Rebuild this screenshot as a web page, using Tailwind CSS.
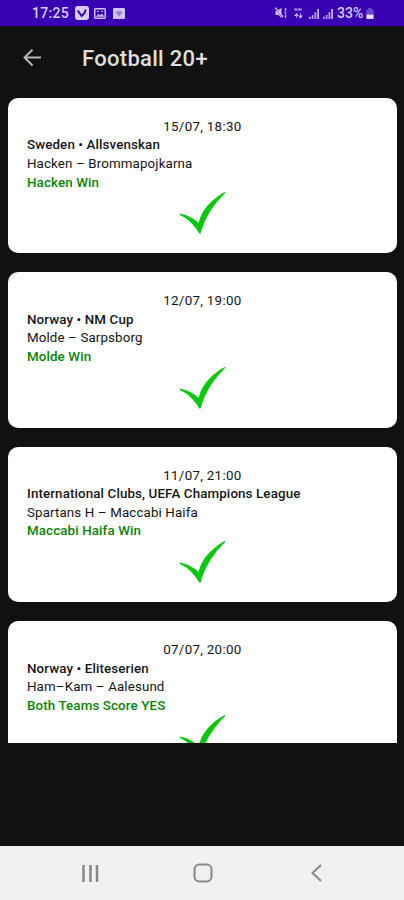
<!DOCTYPE html>
<html lang="en">
<head>
<meta charset="utf-8">
<meta name="viewport" content="width=device-width, initial-scale=1">
<title>Football 20+</title>
<script src="https://cdn.jsdelivr.net/npm/@tailwindcss/browser@4"></script>
</head>
<body class="bg-[#111111] font-['Roboto',sans-serif]">
<svg class="hidden">
  <symbol id="tick" viewBox="0 0 46 42"><path fill="#08c80c" d="M0.3 21.500 C8 23 14.500 26.500 19 31 C22 18 31 8 45 0 L45.800 .8 C34 12.500 25.500 25 21 41.500 L19.500 41.500 C16 34.500 9 27 0.500 23Z"/></symbol>
  <symbol id="signal" viewBox="0 0 12 12"><path stroke="#b7a1ed" stroke-width="1.9" d="M1.5 12V9.5M4.5 12V7.5M7.5 12V4.5"/><path stroke="#c8b8f3" stroke-width="1.9" d="M10.5 12V1"/></symbol>
</svg>
<div class="flex h-[900px] w-[404px] flex-col overflow-hidden">
  <header class="flex h-[26px] shrink-0 items-center bg-[#3700b3] pl-[32px] pr-[29px] text-[#d9cef5]">
    <span class="w-[42px] whitespace-nowrap text-[14px] leading-[26px] font-medium tracking-[0.3px]">17:25</span>
    <svg class="ml-[1px] h-[14px] w-[14px]" viewBox="0 0 14 14"><rect width="14" height="14" rx="3" fill="#d9cef5"/><path d="M2.800 4.500L6.500 10 9.500 7 10.700 3.500" fill="none" stroke="#3700b3" stroke-width="2"/></svg>
    <svg class="ml-[5px] h-[11px] w-[12px]" viewBox="0 0 12 11"><rect x=".75" y=".75" width="10.5" height="9.5" rx="1" fill="none" stroke="#d0c2f4" stroke-width="1.5"/><path d="M2 8.7l2.5-3 1.6 1.7L8 5.5l2.3 3.2z" fill="#d0c2f4"/><path d="M3 3.4h2M7 3.4h2" stroke="#d0c2f4"/></svg>
    <svg class="ml-[7px] h-[11px] w-[12px]" viewBox="0 0 12 11"><rect width="12" height="11" rx="1" fill="#d0c2f4"/><path d="M2.5 4.3Q6 1.2 9.5 4.3L6 8.5z" fill="#9a7dde"/></svg>
    <div class="flex-1"></div>
    <svg class="h-[12px] w-[12px]" viewBox="0 0 12 12"><path d="M0.5 4h2l4-3.2v10.4L3.5 8h-3z" fill="#d0c2f4"/><path d="M0 1.500l8 9.500" stroke="#3700b3" stroke-width="1"/><path d="M0 0.5l8 9.5" stroke="#d0c2f4" stroke-width="1.3"/><path d="M10.5 1v10" stroke="#bba6ef" stroke-width="1.5" stroke-dasharray="3 .5"/></svg>
    <svg class="ml-[7px] h-[12px] w-[9px]" viewBox="0 0 9 12"><path d="M1 1v3M3 1v3M1 2.5h2M5 1v3M7 1v3M5 2.5h2" stroke="#b7a1ed"/><path d="M2.5 6L5 9H0zM6.5 11.5L9 8.5H4z" fill="#d0c2f4"/><path d="M2.5 8v3M6.5 6v3" stroke="#b7a1ed"/></svg>
    <svg class="ml-[5px] h-[11px] w-[12px]"><use href="#signal"/></svg>
    <svg class="ml-[2px] h-[11px] w-[12px]"><use href="#signal"/></svg>
    <span class="ml-[3px] w-[28px] whitespace-nowrap text-[14px] leading-[26px] font-medium">33%</span>
    <svg class="ml-[1px] mr-[1px] h-[11px] w-[8px]" viewBox="0 0 8 12"><path d="M2 0h4v2h2v5H0V2h2z" fill="#6f48cd"/><path d="M0 7h8v4q0 1-1 1H1q-1 0-1-1z" fill="#e2d9fa"/></svg>
  </header>
  <div class="flex h-[64px] shrink-0 items-center pl-[23px]">
    <svg class="h-[18px] w-[19px]" viewBox="0 0 19 18" fill="none" stroke="#b9b9b9" stroke-width="1.9"><path d="M18 8.500H1.5M9.500 .700L1.5 8.500l8 8"/></svg>
    <h1 class="ml-[40px] pt-[1px] text-[22px] leading-[30px] font-medium tracking-[0.3px] text-[#dedede]">Football 20+</h1>
  </div>
  <main class="flex h-[653px] shrink-0 flex-col gap-[18.8px] overflow-hidden pt-[7.8px] pr-[7.500px] pl-[8.300px] text-[13.350px] leading-[18.600px] tracking-[0.120px] text-[#151515]">
    <section class="h-[155.600px] shrink-0 rounded-[10px] bg-white px-[18.700px] pt-[20px]">
      <p class="text-center tracking-[0.3px]">15/07, 18:30</p>
      <p class="font-medium">Sweden • Allsvenskan</p>
      <p>Hacken – Brommapojkarna</p>
      <p class="font-medium text-[#078407]">Hacken Win</p>
      <svg class="mx-auto h-[42px] w-[46px] translate-x-[.6px]"><use href="#tick"/></svg>
    </section>
    <section class="h-[155.600px] shrink-0 rounded-[10px] bg-white px-[18.700px] pt-[20px]">
      <p class="text-center tracking-[0.3px]">12/07, 19:00</p>
      <p class="font-medium">Norway • NM Cup</p>
      <p>Molde – Sarpsborg</p>
      <p class="font-medium text-[#078407]">Molde Win</p>
      <svg class="mx-auto h-[42px] w-[46px] translate-x-[.6px]"><use href="#tick"/></svg>
    </section>
    <section class="h-[155.600px] shrink-0 rounded-[10px] bg-white px-[18.700px] pt-[20px]">
      <p class="text-center tracking-[0.3px]">11/07, 21:00</p>
      <p class="font-medium">International Clubs, UEFA Champions League</p>
      <p>Spartans H – Maccabi Haifa</p>
      <p class="font-medium text-[#078407]">Maccabi Haifa Win</p>
      <svg class="mx-auto h-[42px] w-[46px] translate-x-[.6px]"><use href="#tick"/></svg>
    </section>
    <section class="h-[155.600px] shrink-0 rounded-[10px] bg-white px-[18.700px] pt-[20px]">
      <p class="text-center tracking-[0.3px]">07/07, 20:00</p>
      <p class="font-medium">Norway • Eliteserien</p>
      <p>Ham–Kam – Aalesund</p>
      <p class="font-medium text-[#078407]">Both Teams Score YES</p>
      <svg class="mx-auto h-[42px] w-[46px] translate-x-[.6px]"><use href="#tick"/></svg>
    </section>
  </main>
  <nav class="mt-auto flex h-[54px] shrink-0 items-center bg-[#f1f1f1] pl-[82px] text-[#888888]">
    <svg class="h-[17px] w-[17px]" viewBox="0 0 17 17" stroke="currentColor" stroke-width="2.500"><path d="M1.5 0v17M8.500 0v17M15 0v17"/></svg>
    <svg class="ml-[94px] h-[20px] w-[20px]" viewBox="0 0 20 20" fill="none" stroke="currentColor" stroke-width="2"><rect x="1.5" y="1.5" width="17" height="17" rx="5"/></svg>
    <svg class="ml-[98px] h-[18px] w-[11px]" viewBox="0 0 11 18" fill="none" stroke="currentColor" stroke-width="2"><path d="M10 1L1.500 9l8.500 8"/></svg>
  </nav>
</div>
</body>
</html>
